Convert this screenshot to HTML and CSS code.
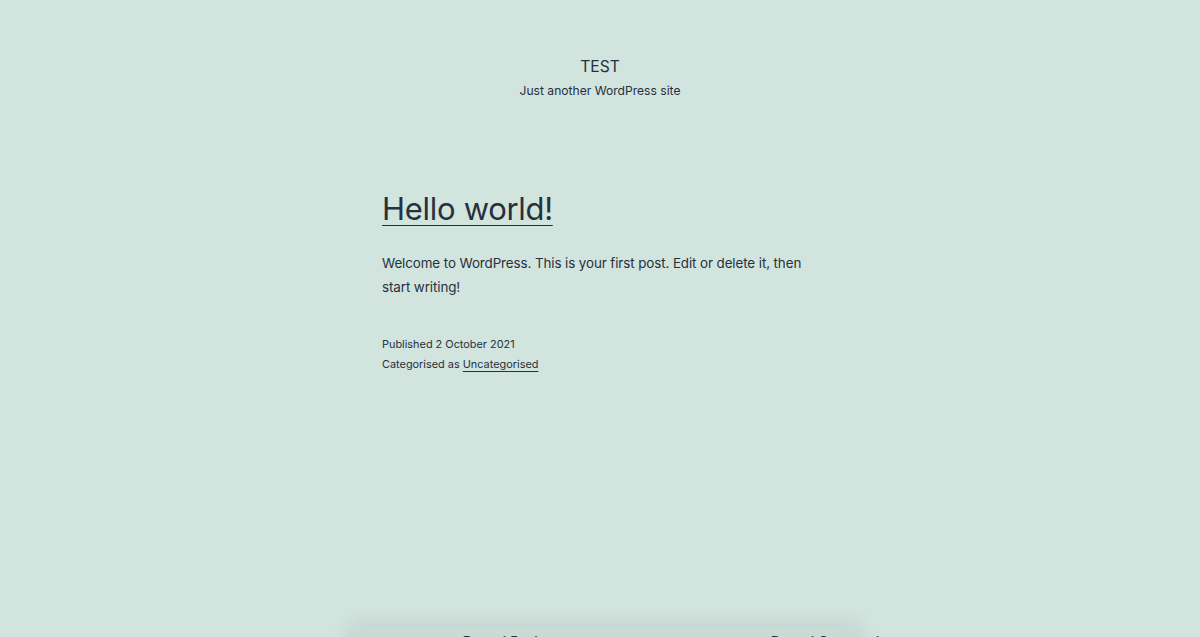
FILE: index.html
```html
<!DOCTYPE html>
<html lang="en-GB">
<head>
<meta charset="utf-8">
<title>TEST – Just another WordPress site</title>
<link rel="stylesheet" href="styles.css">
</head>
<body>
<div class="site">
  <header class="site-header">
    <p class="site-title">TEST</p>
    <p class="site-description">Just another WordPress site</p>
  </header>
  <main class="site-main">
    <article class="post">
      <h2 class="entry-title"><a href="#">Hello world!</a></h2>
      <div class="entry-content">
        <p>Welcome to WordPress. This is your first post. Edit or delete it, then start writing!</p>
      </div>
      <footer class="entry-footer">
        <span class="posted-on">Published 2 October 2021</span>
        <span class="cat-links">Categorised as <a href="#">Uncategorised</a></span>
      </footer>
    </article>
  </main>
  <aside class="widget-area">
    <section class="widget widget-posts"><h2 class="widget-title">Recent Posts</h2></section>
    <section class="widget widget-comments"><h2 class="widget-title">Recent Comments</h2></section>
  </aside>
</div>
</body>
</html>
```
FILE: styles.css
```css
html, body {
  margin: 0;
  padding: 0;
  height: 100%;
  overflow: hidden;
}
body {
  background: #d1e4dd;
  color: #28303d;
  font-family: Inter, "Liberation Sans", sans-serif;
  -webkit-font-smoothing: antialiased;
}
a {
  color: #28303d;
}
.site {
  display: flex;
  flex-direction: column;
  align-items: center;
}
.site-header {
  text-align: center;
  padding-top: 56px;
}
.site-title {
  margin: 0;
  font-size: 15.6px;
  line-height: 22px;
}
.site-description {
  margin: 4px 0 0;
  font-size: 12.1px;
  line-height: 18px;
}
.site-main {
  width: 436px;
  margin-top: 89px;
}
.entry-title {
  margin: 0;
  font-size: 31px;
  font-weight: 400;
  line-height: 40px;
  letter-spacing: -0.3px;
}
.entry-title a {
  text-decoration: underline;
  text-decoration-thickness: 1px;
  text-underline-offset: 5px;
}
.entry-content p {
  margin: 22px 0 0;
  font-size: 13.4px;
  line-height: 24px;
  letter-spacing: -0.1px;
}
.entry-footer {
  display: flex;
  flex-direction: column;
  margin-top: 35px;
  font-size: 10.9px;
  line-height: 20px;
}
.entry-footer a {
  text-decoration-thickness: 1px;
  text-underline-offset: 3px;
}
.widget-area {
  margin-top: 253px;
  margin-left: 10px;
  width: 510px;
  box-sizing: border-box;
  padding-left: 113px;
  display: grid;
  grid-template-columns: 308px 130px;
  background: #cbdad4;
  box-shadow: 0 -3px 20px rgba(40, 48, 61, 0.1);
}
.widget-title {
  margin: 0;
  padding-top: 4px;
  font-size: 13px;
  font-weight: 700;
  line-height: 20px;
  white-space: nowrap;
}
```
